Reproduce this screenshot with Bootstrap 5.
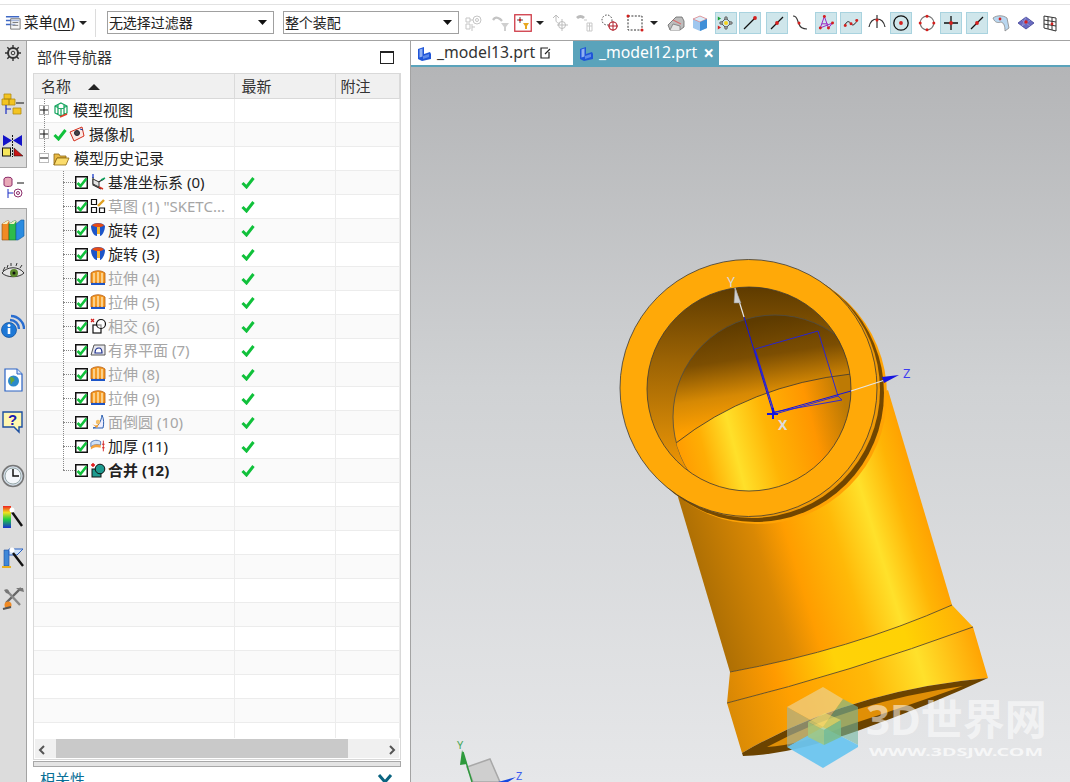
<!DOCTYPE html>
<html lang="zh-CN">
<head>
  <meta charset="UTF-8" />
  <title>部件导航器</title>
  <link href="https://cdn.jsdelivr.net/npm/bootstrap@5.3.0/dist/css/bootstrap.min.css" rel="stylesheet" />
  <style>
    html, body { height: 782px; overflow: hidden; }
    body { font-family: "Noto Sans", "Noto Sans CJK SC", sans-serif; font-size: 15px; color: #222; background: #fff; }
    .top-line { height: 5px; border-bottom: 1px solid #e2e2e2; }
    .tool-bar { height: 36px; border-bottom: 1px solid #a3a3a3; padding-left: 5px; }
    .tool-bar svg { display: block; }
    .menu-txt { margin-left: 2px; font-size: 14.500px; }
    .menu-txt u { text-underline-offset: 2px; }
    .caret-dn { width: 0; height: 0; border-left: 4px solid transparent; border-right: 4px solid transparent; border-top: 4px solid #222; }
    .tb-sep { width: 1px; height: 28px; background: #dcdcdc; margin-left: 8px; }
    .filter-sel { height: 23px; padding: 0 0 0 1px; font-size: 14px; line-height: 21px; color: #222; border: 1px solid #a0a0a0; border-radius: 0; background-size: 9px 5px; background-position: right 6px center;
      background-image: url("data:image/svg+xml,%3csvg xmlns='http://www.w3.org/2000/svg' viewBox='0 0 9 5'%3e%3cpath d='M0 0h9L4.500 5z' fill='%23111'/%3e%3c/svg%3e"); }
    .sel-a { width: 167px; margin-left: 11px; }
    .sel-b { width: 176px; margin-left: 9px; }
    .tb-cell { width: 22px; height: 22px; flex: none; display: flex; align-items: center; justify-content: center; border: 1px solid transparent; }
    .tb-cell.on { background: #cfe6eb; border-color: #a9d3df; }
    .tb-arrow { width: 10px; flex: none; display: flex; justify-content: center; }
    .tg1 { margin-left: 1px; } .tg2 { margin-left: 2px; } .tg3 { margin-left: 3px; }
    .tg4 { margin-left: 4px; } .tg5 { margin-left: 5px; } .tg6 { margin-left: 6px; }
    .work-area { height: 741px; }
    .side-rail { width: 27px; flex: none; background: #dcdcdc; border-right: 1px solid #a3a3a3; }
    .rail-btn { height: 42px; display: flex; align-items: center; justify-content: center; }
    .rail-btn.on { background: #fff; margin-right: -1px; border-top: 1px solid #a8a8a8; border-bottom: 1px solid #a8a8a8; }
    .rail-btn.far { margin-top: 12px; }
    .rail-btn.near { height: 40px; }
    .rail-gear { height: 42px; align-items: flex-start; padding-top: 4px; }
    .nav-panel { width: 384px; flex: none; border-right: 1px solid #a3a3a3; padding: 0 9px 0 6px; overflow: hidden; }
    .nav-title { height: 32px; padding: 0 7px 0 4px; font-size: 15px; color: #333; }
    .max-box { width: 14px; height: 13px; border: 1.500px solid #222; border-top-width: 2px; }
    .tbl-wrap { height: 687px; border: 1px solid #d9d9d9; padding: 0 0 1px; display: flex; flex-direction: column; }
    .tbl-scroll { height: 665px; overflow: hidden; }
    .part-tbl { width: 365px; table-layout: fixed; border-collapse: collapse; }
    .part-tbl th { height: 24px; padding: 0 0 0 7px; font-weight: 400; font-size: 15px; background: #f0f0f0; border-right: 1px solid #dadada; border-bottom: 1px solid #d9d9d9; color: #333; }
    .part-tbl th:last-child { padding-left: 5px; }
    .part-tbl td { height: 24px; padding: 0; border-right: 1px solid #ececec; border-bottom: 1px solid #ececec; }
    .part-tbl tr:nth-child(even) td { background: #fafafa; }
    .sort-up { display: inline-block; width: 0; height: 0; margin: 0 0 2px 17px; border-left: 6px solid transparent; border-right: 6px solid transparent; border-bottom: 6px solid #222; }
    .tree-cell { height: 23px; position: relative; white-space: nowrap; }
    .tree-root { padding-left: 5px; }
    .tree-leaf { padding-left: 29px; }
    .tree-leaf::before { content: ""; position: absolute; left: 29px; top: 0; bottom: 0; border-left: 1px dotted #888; }
    .tree-leaf.last::before { bottom: 50%; }
    .tree-root.stem::before { content: ""; position: absolute; left: 10px; top: 0; bottom: 0; border-left: 1px dotted #888; }
    .tree-root.stem-top::before { bottom: 60%; }
    .h-dots { width: 12px; flex: none; border-top: 1px dotted #888; }
    .expander { width: 10px; height: 10px; flex: none; border: 1px solid #bbb; background: #fff; position: relative; z-index: 1; display: flex; align-items: center; justify-content: center; }
    .leaf-check { margin-right: 2px; }
    .leaf-txt { margin-left: 2px; }
    .root-txt { margin-left: 4px; }
    .cam-icon { margin-left: 2px; }
    .txt-dim { color: #a6a6a6; }
    .ok-wrap { padding-left: 6px; display: flex; align-items: center; }
    .hscroll { height: 19px; margin: 1px 1px 0; background: #f0f0f0; align-items: center; }
    .hs-thumb { height: 19px; width: 292px; margin-left: 7px; background: #c9c9c9; }
    .hs-end { width: 14px; flex: none; }
    .split-bar { height: 6px; margin-top: 1px; border: 1px solid #a8a8a8; background: #e4e4e4; width: 368px; }
    .rel-title { padding: 0 8px 0 7px; color: #0a7096; font-size: 15px; line-height: 22px; margin-top: 1px; }
    .main-area { min-width: 0; }
    .tab-strip { height: 26px; border-bottom: 2px solid #5aa3bb; }
    .file-tab { height: 24px; padding-left: 6px; font-size: 15.800px; white-space: nowrap; }
    .tab-a { width: 162px; color: #333; }
    .tab-b { width: 146px; background: #5aa3bb; color: #fff; }
    .tab-name { margin-left: 6px; }
    .tab-x { margin-left: 6px; font-weight: 700; font-size: 19px; line-height: 20px; }
    .scene { display: block; }
    .scene text { font-family: "Noto Sans", "Noto Sans CJK SC", sans-serif; }
  </style>
</head>
<body>

<svg width="0" height="0" class="position-absolute">
  <defs>
    <symbol id="i-ok" viewBox="0 0 14 13"><path d="M1.500 7 5.500 11 12.500 2" fill="none" stroke="#10c13b" stroke-width="3"/></symbol>
    <symbol id="i-box" viewBox="0 0 13 13"><rect x=".75" y=".75" width="11.500" height="11.500" fill="#fff" stroke="#111" stroke-width="1.500"/><path d="M2.500 7 5.500 10 11.500 2.500" fill="none" stroke="#10c13b" stroke-width="2.600"/></symbol>
    <symbol id="i-view" viewBox="0 0 16 16"><path d="M8 1 14 4v7l-6 3-6-3V4zM2 4l6 3 6-3M8 7v7M5 2.500v10M11 2.500v10" fill="none" stroke="#11a35c" stroke-width="1.200"/><path d="M7 15l7-3" stroke="#e5402a" stroke-width="1.600"/></symbol>
    <symbol id="i-cam" viewBox="0 0 16 16"><path d="M1 6 13 1l2 9-10 5z" fill="#fbe9e4" stroke="#d4301e"/><circle cx="8" cy="7" r="2.500" fill="#444" stroke="#223"/><path d="M11 3l3 1" stroke="#1b3d9b"/></symbol>
    <symbol id="i-folder" viewBox="0 0 17 15"><path d="M1 3h5l1 2h6v2H4l-3 7z" fill="#e9ba45" stroke="#8a6510" stroke-width=".8"/><path d="M1 14 4 7h12l-3 7z" fill="#fbdc6c" stroke="#8a6510" stroke-width=".8"/></symbol>
    <symbol id="i-datum" viewBox="0 0 16 16"><path d="M3 3v8l8 4M3 11l11-6" fill="none" stroke="#222" stroke-width="1.100"/><path d="M3 5 9 8v5L3 10z" fill="#e4e4e4" stroke="#333" stroke-width="1"/><path d="M3 0v4" stroke="#1b3dcc" stroke-width="1.300"/><path d="M11 6l4-2" stroke="#11a35c" stroke-width="1.500"/><path d="M9 13l4 2" stroke="#d4301e" stroke-width="1.500"/></symbol>
    <symbol id="i-sketch" viewBox="0 0 16 16"><path d="M1.500 1.500h5v5h-5zM1.500 9.500h5v5h-5zM9.500 14.500V10h5v4.500z" fill="#fff" stroke="#111" stroke-width="1.200"/><path d="M8 8l6-6" stroke="#e0a020" stroke-width="2.400"/></symbol>
    <symbol id="i-rev" viewBox="0 0 16 16"><path d="M1 4C3 0 13 0 15 4c0 5-3 10-5 10V5H7v9C4 14 1 9 1 4z" fill="#1d55c8"/><path d="M2 3.500C4 .5 12 .5 14 3.500L11 5H6z" fill="#e54b16"/><path d="M7 5h3v7H7z" fill="#f7b42a"/></symbol>
    <symbol id="i-ext" viewBox="0 0 16 16"><path d="M1 3C5 0 11 0 15 3v10H1z" fill="#f59b25" stroke="#b45a10" stroke-width=".8"/><path d="M4 3v10M8 2v11M12 3v10" stroke="#fff3d0" stroke-width="1.200"/><path d="M1 13h14v2H1z" fill="#1d55c8"/></symbol>
    <symbol id="i-inter" viewBox="0 0 16 16"><path d="M1 1l3 3M4 1 1 4" stroke="#d4201e" stroke-width="1.200"/><rect x="3" y="7" width="8" height="8" fill="#fff" stroke="#111" stroke-width="1.200"/><circle cx="11" cy="6" r="4.500" fill="#fff" fill-opacity=".5" stroke="#111" stroke-width="1.200"/></symbol>
    <symbol id="i-plane" viewBox="0 0 16 16"><path d="M1 13 4 3h11v10z" fill="#e8e8ee" stroke="#555"/><path d="M5 11c0-4 2-5 4-5s3 2 3 5z" fill="#fff" stroke="#1c2f8c" stroke-width="1.200"/></symbol>
    <symbol id="i-blend" viewBox="0 0 16 16"><path d="M12 1c2 4 2 9 1 13H3c5-1 8-6 9-13z" fill="#eef" stroke="#2b5fb0"/><path d="M1 9c3 3 6 3 8 1l-2 4z" fill="#f59b25"/><circle cx="8" cy="8" r="2.200" fill="#f5c16a"/></symbol>
    <symbol id="i-thick" viewBox="0 0 18 16"><path d="M1 4c3-3 8-3 11-1v4c-3-1-8-1-11 2z" fill="#cfe0f5" stroke="#4f73b0"/><path d="M1 9c3-3 8-3 11-2v3c-3-1-8-1-11 2z" fill="#f5a23a"/><path d="M15 2v12M13.500 6h3M13.500 10h3" stroke="#d4201e"/></symbol>
    <symbol id="i-unite" viewBox="0 0 16 16"><path d="M1 3h4M3 1v4" stroke="#e01010" stroke-width="1.400"/><rect x="2" y="7" width="9" height="8" fill="#1d9a8e" stroke="#111"/><circle cx="10" cy="7" r="4.800" fill="#1d9a8e" stroke="#111"/></symbol>

    <symbol id="t-menu" viewBox="0 0 18 18"><path d="M1 3h14M1 7h14M1 11h10" stroke="#3f68c4" stroke-width="1.600"/><path d="M6 5h10v11H6z" fill="#eee" fill-opacity=".6" stroke="#777"/><path d="M8 9h6M8 12h6" stroke="#777"/></symbol>
    <symbol id="t-g1" viewBox="0 0 18 18"><g fill="none" stroke="#c5c5c5"><path d="M1 4h4v4H1zM1 10h4v5H1zM5 6h3"/><circle cx="12" cy="6" r="4"/><circle cx="12" cy="6" r="1.500"/><path d="M7 10v7M7 13h3"/></g></symbol>
    <symbol id="t-g2" viewBox="0 0 18 18"><path d="M1 6c2-3 4-3 7-1l2 2" fill="none" stroke="#c4c4c4" stroke-width="2.400"/><path d="M9 9h8l-3 4v4h-2v-4z" fill="#cfcfcf"/></symbol>
    <symbol id="t-filter" viewBox="0 0 18 18"><rect x=".75" y=".75" width="16.500" height="16.500" fill="#fff" stroke="#cf3a46" stroke-width="1.300"/><path d="M6 3v6M3 6h6" stroke="#555"/><circle cx="6" cy="6" r="1.300" fill="#d4201e"/><path d="M9 9h6l-2 3v3h-2v-3z" fill="#e8a820"/></symbol>
    <symbol id="t-g3" viewBox="0 0 18 18"><g fill="none" stroke="#bdbdbd"><path d="M1 4 4 1l3 3M4 1v6c0 1 2 2 4 3"/><circle cx="10" cy="11" r="3.500"/><path d="M10 5v12M5 11h11"/></g></symbol>
    <symbol id="t-g4" viewBox="0 0 18 18"><path d="M1 4c2-2 5-2 7 0" fill="none" stroke="#bbb" stroke-width="2.800"/><path d="M8 6h3M11 9h5v8h-5zM11 12h5M13.500 9v8" fill="none" stroke="#c9c9c9"/></symbol>
    <symbol id="t-dot-box" viewBox="0 0 18 18"><circle cx="6" cy="6" r="5" fill="none" stroke="#444" stroke-dasharray="1.500 1.500"/><circle cx="12" cy="12" r="4" fill="#fff" stroke="#b3232e" stroke-width="1.200"/><path d="M12 7v10M7 12h10" stroke="#b3232e"/></symbol>
    <symbol id="t-rect" viewBox="0 0 18 18"><rect x="2" y="2" width="14" height="14" fill="none" stroke="#333" stroke-dasharray="2 1.400"/><circle cx="2" cy="2" r="1.500" fill="#d4201e"/><circle cx="16" cy="16" r="1.500" fill="#d4201e"/></symbol>
    <symbol id="t-shoe" viewBox="0 0 18 18"><path d="M1 11 9 3h6l2 4v6l-4 3H3z" fill="#bdbdbd" stroke="#666" stroke-width=".8"/><path d="M6 6l8 4" stroke="#d96b6b" stroke-width="1.200"/><path d="M3 16l3-6 7 2v4" fill="#e4e4e4" stroke="#777" stroke-width=".8"/></symbol>
    <symbol id="t-cube" viewBox="0 0 18 18"><path d="M2 5l7-3 7 3v9l-7 3-7-3z" fill="#9ec7ef"/><path d="M9 8 2 5l7-3 7 3z" fill="#d9edfa" stroke="#e57a7a" stroke-width=".7"/><path d="M9 8v9l7-3V5z" fill="#3f8fd8"/></symbol>
    <symbol id="t-points" viewBox="0 0 22 22"><path d="M11 5l6 6-6 6-6-6z" fill="none" stroke="#333"/><circle cx="11" cy="11" r="2.500" fill="#f6d31e"/><g fill="#fff" stroke="#222"><circle cx="11" cy="5" r="1.500"/><circle cx="17" cy="11" r="1.500"/><circle cx="11" cy="17" r="1.500"/><circle cx="5" cy="11" r="1.500"/></g><path d="M1 3v5l4-2.500z" fill="#1aa035"/><path d="M1 14v5l4-2.500z" fill="#d4201e"/></symbol>
    <symbol id="t-line-end" viewBox="0 0 18 18"><path d="M3 15 14 4" stroke="#111" stroke-width="1.300"/><circle cx="14" cy="4" r="1.900" fill="#d4201e"/></symbol>
    <symbol id="t-line-mid" viewBox="0 0 18 18"><path d="M3 15 15 3" stroke="#111" stroke-width="1.300"/><circle cx="9" cy="9" r="1.900" fill="#d4201e"/></symbol>
    <symbol id="t-s" viewBox="0 0 18 18"><path d="M2 2c5 0 4 5 6 8 1 3 3 5 8 5" fill="none" stroke="#333" stroke-width="1.200"/><circle cx="8" cy="9" r="1.500" fill="#d4201e"/></symbol>
    <symbol id="t-poly" viewBox="0 0 22 22"><path d="M4 17 9 3l5 14 5-6zM6 12h7" fill="none" stroke="#9a22c4" stroke-width="1.200"/><g fill="#d4201e"><circle cx="4" cy="17" r="1.800"/><circle cx="9" cy="3" r="1.800"/><circle cx="14" cy="17" r="1.800"/><circle cx="19" cy="11" r="1.800"/></g></symbol>
    <symbol id="t-wave" viewBox="0 0 22 22"><path d="M3 15c3-8 6-6 8-3s5 1 8-5" fill="none" stroke="#222" stroke-width="1.200"/><g fill="#d4201e"><circle cx="4" cy="14" r="1.800"/><circle cx="11" cy="12" r="1.800"/><circle cx="18" cy="8" r="1.800"/></g></symbol>
    <symbol id="t-arc" viewBox="0 0 18 18"><path d="M1 13c1-5 4-8 8-8s7 3 8 8M9 1v13" fill="none" stroke="#333" stroke-width="1.200"/><circle cx="9" cy="6" r="1.500" fill="#d4201e"/></symbol>
    <symbol id="t-circ" viewBox="0 0 18 18"><circle cx="9" cy="9" r="7.200" fill="none" stroke="#111" stroke-width="1.300"/><circle cx="9" cy="9" r="1.900" fill="#d4201e"/></symbol>
    <symbol id="t-circ4" viewBox="0 0 18 18"><circle cx="9" cy="9" r="6.800" fill="none" stroke="#777" stroke-width="1.200"/><g fill="#d4201e"><circle cx="9" cy="2.200" r="1.500"/><circle cx="9" cy="15.800" r="1.500"/><circle cx="2.200" cy="9" r="1.500"/><circle cx="15.800" cy="9" r="1.500"/></g></symbol>
    <symbol id="t-cross" viewBox="0 0 18 18"><path d="M9 2v14M2 9h14" stroke="#111" stroke-width="1.300"/><circle cx="9" cy="9" r="1.900" fill="#d4201e"/></symbol>
    <symbol id="t-surf" viewBox="0 0 18 18"><path d="M1 4c4-3 10-3 14 0l2 10-4 3c0-5-1-8-4-9-3 1-6 1-8-4z" fill="#b9d7f0" stroke="#888" stroke-width=".8"/><circle cx="8" cy="5" r="1.400" fill="#d4201e"/></symbol>
    <symbol id="t-dsurf" viewBox="0 0 18 18"><path d="M1 9 9 3l8 6-8 6z" fill="#6a6cc0" stroke="#3d3f95" stroke-width=".8"/><path d="M5 6l8 6M9 3l-4 9M13 6l-8 6" stroke="#a9aae0" stroke-width=".6"/><circle cx="9" cy="8" r="1.700" fill="#d4201e"/></symbol>
    <symbol id="t-grid" viewBox="0 0 18 18"><path d="M3 2l12 2v13L3 14zM7 3v12M11 3.500V16M3 6l12 2M3 10l12 2" fill="none" stroke="#333"/><circle cx="11" cy="10" r="1.400" fill="#d4201e"/></symbol>

    <symbol id="r-gear" viewBox="0 0 16 16"><circle cx="8" cy="8" r="5" fill="none" stroke="#333" stroke-width="2"/><circle cx="8" cy="8" r="1.800" fill="#dcdcdc" stroke="#333"/><path d="M8 0v3M8 13v3M0 8h3M13 8h3M2.300 2.300l2 2M11.700 11.700l2 2M2.300 13.700l2-2M11.700 4.300l2-2" stroke="#333" stroke-width="1.400"/></symbol>
    <symbol id="r-asm" viewBox="0 0 24 24"><path d="M3 2h7v5H3zM1 7h7v6H1zM8 7h6v6H8z" fill="#f3c422" stroke="#b18a10" stroke-width=".8"/><path d="M5 13v9M5 17h5" stroke="#1b2fc4" stroke-width="1.200"/><path d="M15 11h8" stroke="#111"/><path d="M12 16h8v6h-8z" fill="#f3c422" stroke="#b18a10" stroke-width=".8"/></symbol>
    <symbol id="r-con" viewBox="0 0 24 24"><path d="M2 1v11l9-5.500zM21 1v11l-9-5.500z" fill="#1414c8"/><path d="M11.500 1v22" stroke="#111" stroke-dasharray="2 1"/><rect x="1.500" y="14" width="8" height="8" fill="#f6e65a" stroke="#111"/><path d="M13 14v8h9z" fill="#c81414" stroke="#111" stroke-width=".5"/></symbol>
    <symbol id="r-part" viewBox="0 0 24 24"><ellipse cx="6" cy="3" rx="4" ry="1.800" fill="#e8a9b8" stroke="#8c2d6b"/><path d="M2 3v6c0 2 8 2 8 0V3" fill="#e8a9b8" stroke="#8c2d6b"/><path d="M6 13v9M6 17h5" stroke="#1b2fc4"/><path d="M15 7h7" stroke="#111"/><circle cx="16" cy="17" r="4" fill="none" stroke="#8c2d6b"/><circle cx="16" cy="17" r="1.500" fill="none" stroke="#8c2d6b"/></symbol>
    <symbol id="r-books" viewBox="0 0 24 24"><path d="M1 6l5-3h2v19H1z" fill="#f08a24" stroke="#8a4d10" stroke-width=".6"/><path d="M8 6l5-3h2v19H8z" fill="#2ebc4a" stroke="#15702a" stroke-width=".6"/><path d="M15 6l5-4h3v16l-6 4h-2z" fill="#2a8be0" stroke="#125a9a" stroke-width=".6"/><path d="M1 6l5-3h2l-2 3zM8 6l5-3h2l-2 3z" fill="#f5efc0"/></symbol>
    <symbol id="r-eye" viewBox="0 0 24 24"><path d="M1 13C6 6 18 6 23 13c-5 5-17 5-22 0z" fill="#e4e4e4" stroke="#333"/><circle cx="13" cy="13" r="4" fill="#5c8a2c"/><circle cx="13" cy="13" r="1.500" fill="#111"/><path d="M2 11 4 7M6 8l1-3M10 6V3M15 6l1-3M19 8l2-3" stroke="#333"/></symbol>
    <symbol id="r-info" viewBox="0 0 24 24"><path d="M9 6c5 0 9 4 9 9M10 2c7 0 13 6 13 13" fill="none" stroke="#2a6ed0" stroke-width="2.400"/><circle cx="8" cy="16" r="7.500" fill="#1e78d6" stroke="#0c4a96" stroke-width=".7"/><circle cx="8" cy="11.500" r="1.500" fill="#fff"/><path d="M8 14v6" stroke="#fff" stroke-width="2.600"/></symbol>
    <symbol id="r-web" viewBox="0 0 24 24"><path d="M4 1h12l5 5v17H4z" fill="#fff" stroke="#2a62c4" stroke-width="1.200"/><path d="M16 1v5h5" fill="#d8e6fa" stroke="#2a62c4"/><circle cx="12.500" cy="13" r="5.500" fill="#2b8ac9"/><path d="M9 10c2-1 4 0 4 2s-3 1-3 4" fill="#67a93a" stroke="#67a93a"/></symbol>
    <symbol id="r-help" viewBox="0 0 24 24"><path d="M2 2h19v15h-3v5l-5-5H2z" fill="#fff7b0" stroke="#1c4fa0" stroke-width="1.400"/><text x="11.500" y="14.500" text-anchor="middle" font-size="15" font-weight="700" fill="#1b1bb0" font-family="Liberation Sans, sans-serif">?</text></symbol>
    <symbol id="r-clock" viewBox="0 0 24 24"><circle cx="12" cy="12" r="10.500" fill="#d4deea" stroke="#777" stroke-width="1.600"/><circle cx="12" cy="12" r="8" fill="#f4f7fb" stroke="#9aa"/><path d="M12 5v7h6" fill="none" stroke="#111" stroke-width="1.500"/></symbol>
    <symbol id="r-palette" viewBox="0 0 24 24"><defs><linearGradient id="rb" x1="0" y1="0" x2="0" y2="1"><stop offset="0" stop-color="#f02020"/><stop offset=".3" stop-color="#f0e020"/><stop offset=".6" stop-color="#20d040"/><stop offset="1" stop-color="#1c2fd0"/></linearGradient></defs><rect x="2" y="1" width="8" height="22" fill="url(#rb)"/><path d="M11 7l10 14" stroke="#111" stroke-width="2.400"/><circle cx="11" cy="5" r="2.500" fill="#fff"/></symbol>
    <symbol id="r-wand" viewBox="0 0 24 24"><path d="M3 5h5v16H3z" fill="#3f88d8" stroke="#1c4fa0" stroke-width=".6"/><path d="M1 22h9" stroke="#e8b020" stroke-width="2"/><path d="M8 4h14l-6 6h-8z" fill="#cfe2f7" stroke="#2a62c4"/><path d="M12 8l10 13" stroke="#111" stroke-width="2.400"/><circle cx="11" cy="5" r="2.500" fill="#fff"/></symbol>
    <symbol id="r-tools" viewBox="0 0 24 24"><path d="M20 2 5 17" stroke="#666" stroke-width="2.400"/><path d="M15 2h7l1 4-4-1z" fill="#777"/><path d="M7 6l12 13" stroke="#888" stroke-width="2.400"/><path d="M3 4c3-2 6 0 5 4L5 7z" fill="#777"/><circle cx="7" cy="19" r="3.500" fill="#f08a24"/><path d="M2 23l8-2" stroke="#555" stroke-width="2"/></symbol>

    <symbol id="tab-part" viewBox="0 0 14 15"><path d="M1 3 7 1v7l6-2 1 2v5l-9 2-4-2z" fill="#1f55d8"/><path d="M2.500 3.500 5.500 2.500v8l-3 1z" fill="#8fb0f2"/><path d="M6 10l6-2v3l-6 2z" fill="#5d8aea"/></symbol>

    <linearGradient id="g-bg" x1="0" y1="0" x2="0" y2="1"><stop offset="0" stop-color="#b4b5b7"/><stop offset=".45" stop-color="#d0d2d4"/><stop offset="1" stop-color="#e6e7e9"/></linearGradient>
    <linearGradient id="g-body" gradientUnits="userSpaceOnUse" x1="680" y1="555" x2="925" y2="480"><stop offset="0" stop-color="#a56a04"/><stop offset=".3" stop-color="#d98804"/><stop offset=".42" stop-color="#ff9d00"/><stop offset=".6" stop-color="#ffb908"/><stop offset=".75" stop-color="#ffe12b"/><stop offset=".88" stop-color="#ffb405"/><stop offset="1" stop-color="#ff9a00"/></linearGradient>
    <linearGradient id="g-band" gradientUnits="userSpaceOnUse" x1="728" y1="690" x2="965" y2="620"><stop offset="0" stop-color="#d98804"/><stop offset=".2" stop-color="#ff9a00"/><stop offset=".45" stop-color="#ffd208"/><stop offset=".75" stop-color="#ffd204"/><stop offset="1" stop-color="#ffb005"/></linearGradient>
    <linearGradient id="g-foot" gradientUnits="userSpaceOnUse" x1="730" y1="725" x2="985" y2="650"><stop offset="0" stop-color="#d98a06"/><stop offset=".25" stop-color="#ffa000"/><stop offset=".55" stop-color="#ffb908"/><stop offset=".75" stop-color="#ffe12b"/><stop offset="1" stop-color="#ff9f00"/></linearGradient>
    <linearGradient id="g-hole" x1="0" y1="0" x2="0" y2="1"><stop offset="0" stop-color="#5e3b00"/><stop offset=".35" stop-color="#9a6204"/><stop offset=".7" stop-color="#d08506"/><stop offset="1" stop-color="#ff9d00"/></linearGradient>
    <linearGradient id="g-dome" gradientUnits="userSpaceOnUse" x1="760" y1="320" x2="775" y2="420"><stop offset="0" stop-color="#5e3b00"/><stop offset=".35" stop-color="#7c4e02"/><stop offset=".7" stop-color="#d68904"/><stop offset="1" stop-color="#ffa000"/></linearGradient>
    <linearGradient id="g-lower" gradientUnits="userSpaceOnUse" x1="675" y1="470" x2="850" y2="425"><stop offset="0" stop-color="#ff9600"/><stop offset=".18" stop-color="#ffae04"/><stop offset=".35" stop-color="#ffe02a"/><stop offset=".55" stop-color="#ffb405"/><stop offset=".8" stop-color="#ff9600"/><stop offset="1" stop-color="#bd7a04"/></linearGradient>
    <linearGradient id="g-lip" x1="0" y1="0" x2="1" y2="1"><stop offset="0" stop-color="#d69210"/><stop offset=".55" stop-color="#7a4c00"/><stop offset="1" stop-color="#6a4100"/></linearGradient>
    <clipPath id="c-hole"><circle cx="749" cy="389" r="102"/></clipPath>
    <clipPath id="c-dome"><circle cx="775" cy="417" r="102"/></clipPath>
    <clipPath id="c-frame"><rect x="411" y="67" width="659" height="715"/></clipPath>
  </defs>
</svg>

<div class="top-line"></div>
<div class="tool-bar d-flex align-items-center">
  <svg width="17" height="17"><use href="#t-menu"/></svg>
  <span class="menu-txt">菜单(<u>M</u>)</span>
  <span class="caret-dn ms-1"></span>
  <span class="tb-sep"></span>
  <select class="form-select filter-sel sel-a"><option>无选择过滤器</option></select>
  <select class="form-select filter-sel sel-b"><option>整个装配</option></select>
  <div class="d-flex align-items-center" id="toolIcons"></div>
</div>

<div class="work-area d-flex">
  <div class="side-rail">
    <div class="rail-btn rail-gear"><svg width="16" height="16"><use href="#r-gear"/></svg></div>
    <div id="railIcons"></div>
  </div>

  <div class="nav-panel">
    <div class="nav-title d-flex align-items-center justify-content-between">
      <span>部件导航器</span>
      <span class="max-box"></span>
    </div>
    <div class="tbl-wrap">
      <div class="tbl-scroll">
        <table class="part-tbl">
          <colgroup><col width="200"><col width="101"><col width="64"></colgroup>
          <thead><tr><th>名称<span class="sort-up"></span></th><th>最新</th><th>附注</th></tr></thead>
          <tbody id="treeRows"></tbody>
        </table>
      </div>
      <div class="hscroll d-flex">
        <div class="hs-end text-center"><svg width="8" height="10" viewBox="0 0 8 10"><path d="M6 1 2 5l4 4" fill="none" stroke="#555" stroke-width="2"/></svg></div>
        <div class="hs-thumb"></div>
        <div class="hs-end ms-auto text-center"><svg width="8" height="10" viewBox="0 0 8 10"><path d="M2 1l4 4-4 4" fill="none" stroke="#555" stroke-width="2"/></svg></div>
      </div>
    </div>
    <div class="split-bar"></div>
    <div class="rel-title d-flex justify-content-between align-items-center">
      <span>相关性</span>
      <svg width="16" height="10" viewBox="0 0 16 10"><path d="M2 1l6 7 6-7" fill="none" stroke="#0a6480" stroke-width="3"/></svg>
    </div>
  </div>

  <div class="main-area flex-grow-1">
    <div class="tab-strip d-flex">
      <div class="file-tab tab-a d-flex align-items-center">
        <svg width="14" height="15"><use href="#tab-part"/></svg>
        <span class="tab-name">_model13.prt</span>
        <svg class="ms-1" width="12" height="12" viewBox="0 0 12 12"><path d="M9 1H2v10h8V5M6 7l5-5" fill="none" stroke="#222" stroke-width="1.200"/></svg>
      </div>
      <div class="file-tab tab-b d-flex align-items-center">
        <svg width="14" height="15"><use href="#tab-part"/></svg>
        <span class="tab-name">_model12.prt</span>
        <span class="tab-x">×</span>
      </div>
    </div>

    <svg class="scene" width="659" height="715" viewBox="411 67 659 715">
      <rect x="411" y="67" width="659" height="715" fill="url(#g-bg)"/>

      <!-- elbow body -->
      <path d="M678 497 730 672Q850 650 952 605L888 390Z" fill="url(#g-body)"/>
      <path d="M730 672Q850 650 952 605L973 627Q850 672 727 703Z" fill="url(#g-band)"/>
      <path d="M727 703Q850 672 973 627L988 678Q850 690 742 753Z" fill="url(#g-foot)"/>
      <path d="M730 672Q850 650 952 605M727 703Q850 672 973 627" fill="none" stroke="#5b4a25" stroke-width=".9"/>
      <path d="M742 753Q850 690 988 678 930 705 860 730 790 755 743 756Z" fill="#6b4300"/>
      <path d="M767 747Q850 702 963 686 910 705 843 727 800 745 767 747Z" fill="#e08f06"/>

      <!-- flange -->
      <circle cx="758" cy="395" r="129" fill="#ffa305"/>
      <circle cx="755" cy="393" r="129" fill="url(#g-lip)"/>
      <circle cx="752" cy="390" r="128" fill="#f09a06"/>
      <circle cx="748.500" cy="388" r="128.500" fill="#ffa908" stroke="#3c3a36" stroke-width=".8"/>

      <!-- hole and dome -->
      <circle cx="749" cy="389" r="102" fill="url(#g-hole)"/>
      <g clip-path="url(#c-hole)">
        <circle cx="775" cy="417" r="102" fill="url(#g-dome)" stroke="#4c4c48" stroke-width=".8"/>
        <g clip-path="url(#c-dome)">
          <path d="M676 443Q750 385 851 374V510H660Z" fill="url(#g-lower)"/>
          <path d="M676 443Q750 385 851 374" fill="none" stroke="#4a4030" stroke-width=".9"/>
        </g>
      </g>
      <circle cx="749" cy="389" r="102" fill="none" stroke="#3c3a36" stroke-width=".8"/>

      <!-- datum csys and sketch -->
      <path d="M755 349 818 331 838 396 775 414ZM755 351 774 412 842 400 838 396" fill="none" stroke="#1f1fe6" stroke-width=".9"/>
      <path d="M773 413 744 317" stroke="#1414e0" stroke-width="1"/>
      <path d="M744 317 735 288" stroke="#e6e6e6" stroke-width="1.200"/>
      <path d="M735 288 741 303 734 303Z" fill="#d0d0d0" stroke="#888" stroke-width=".5"/>
      <path d="M773 413 851 391" stroke="#1414e0" stroke-width="1"/>
      <path d="M851 391 885 380" stroke="#e6e6e6" stroke-width="1.200"/>
      <path d="M899 375 884 383 882 377Z" fill="#1414e0"/>
      <path d="M767 414h11M773 408v11" stroke="#1414e0" stroke-width="2"/>
      <text x="727" y="287" font-size="14" fill="#d8d8d8">Y</text>
      <text x="903" y="378" font-size="13" fill="#3c3cf0">Z</text>
      <text x="778" y="430" font-size="14" font-weight="700" fill="#dcdcdc">X</text>

      <!-- small triad -->
      <path d="M467 767 490 759 500 782H473Z" fill="#cfcfcf" stroke="#a8a8a8" stroke-width="1.500"/>
      <path d="M463 752 472 782" stroke="#2e9a3c" stroke-width="1.500"/>
      <path d="M462 750 467 764 460 765Z" fill="#2e9a3c"/>
      <path d="M498 782 516 777 508 782Z" fill="#1648e0"/>
      <text x="457" y="749" font-size="11" fill="#4aa75a">Y</text>
      <text x="516" y="780" font-size="11" fill="#3d5cf0">Z</text>

      <!-- watermark -->
      <g clip-path="url(#c-frame)">
        <path d="M823 687 843 699 823 727 787 707Z" fill="#e9d9a6" fill-opacity=".6"/>
        <path d="M787 707 823 727 787 747Z" fill="#9fb6a6" fill-opacity=".6"/>
        <path d="M843 699 858 707V745L823 727Z" fill="#6fb5a0" fill-opacity=".6"/>
        <path d="M787 747 823 727 858 745V747L823 768Z" fill="#6cc5ef" fill-opacity=".95"/>
        <path d="M808 722 825 713 841 720 824 730Z" fill="#f5e86a" fill-opacity=".55"/>
        <path d="M808 722 824 730V745L808 737Z" fill="#a6c878" fill-opacity=".8"/>
        <path d="M824 730 841 720V737L824 745Z" fill="#7dbd8a" fill-opacity=".85"/>
        <text x="866" y="735" font-size="42" font-weight="700" fill="#fff" fill-opacity=".55">3D世界网</text>
        <text x="869" y="756" font-size="10" font-weight="700" textLength="174" lengthAdjust="spacingAndGlyphs" fill="#fff" fill-opacity=".7">WWW.3DSJW.COM</text>
      </g>
    </svg>
  </div>
</div>

<script src="https://cdn.jsdelivr.net/npm/bootstrap@5.3.0/dist/js/bootstrap.bundle.min.js"></script>
<script>
  // toolbar: [symbol, gap class, active]
  const tools = [
    ['t-g1', 'tg5'], ['t-g2', 'tg5'], ['t-filter', ''], ['arrow', 'tg1'], ['t-g3', 'tg5'], ['t-g4', 'tg2'],
    ['t-dot-box', 'tg3'], ['t-rect', 'tg3'], ['arrow', 'tg3'], ['t-shoe', 'tg6'], ['t-cube', 'tg2'],
    ['t-points', 'tg4', 1], ['t-line-end', 'tg2', 1], ['t-line-mid', 'tg5', 1], ['t-s', 'tg1'],
    ['t-poly', 'tg4', 1], ['t-wave', 'tg3', 1], ['t-arc', 'tg4'], ['t-circ', 'tg2', 1], ['t-circ4', 'tg4'],
    ['t-cross', 'tg2', 1], ['t-line-mid', 'tg4', 1], ['t-surf', 'tg2'], ['t-dsurf', 'tg3'], ['t-grid', 'tg2']
  ];
  document.getElementById('toolIcons').innerHTML = tools.map(([id, gap, on], i) => {
    if (id === 'arrow') return `<span class="tb-arrow ${gap}"><span class="caret-dn"></span></span>`;
    const first = i === 0 ? 'ms-1' : '';
    return `<span class="tb-cell ${gap} ${first} ${on ? 'on' : ''}"><svg width="18" height="18"><use href="#${id}"/></svg></span>`;
  }).join('');

  // left rail
  const rail = [['r-asm', ''], ['r-con', ''], ['r-part', 'on'], ['r-books', ''], ['r-eye', ''], ['r-info', 'far'], ['r-web', 'far'], ['r-help', ''], ['r-clock', 'far'], ['r-palette', 'near'], ['r-wand', 'near'], ['r-tools', '']];
  document.getElementById('railIcons').innerHTML = rail.map(([id, cls]) =>
    `<div class="rail-btn ${cls}"><svg width="24" height="24"><use href="#${id}"/></svg></div>`).join('');

  // feature tree
  const leaves = [
    ['i-datum', '基准坐标系 (0)', 0], ['i-sketch', '草图 (1) "SKETC...', 1], ['i-rev', '旋转 (2)', 0], ['i-rev', '旋转 (3)', 0],
    ['i-ext', '拉伸 (4)', 1], ['i-ext', '拉伸 (5)', 1], ['i-inter', '相交 (6)', 1], ['i-plane', '有界平面 (7)', 1],
    ['i-ext', '拉伸 (8)', 1], ['i-ext', '拉伸 (9)', 1], ['i-blend', '面倒圆 (10)', 1], ['i-thick', '加厚 (11)', 0], ['i-unite', '合并 (12)', 0]
  ];
  const use = (id, w, h, cls = '') => `<svg class="flex-none ${cls}" width="${w}" height="${h}"><use href="#${id}"/></svg>`;
  const plus = '<svg width="8" height="8"><path d="M0 4h8M4 0v8" stroke="#111"/></svg>';
  const minus = '<svg width="8" height="8"><path d="M0 4h8" stroke="#111"/></svg>';
  const okMark = `<div class="ok-wrap">${use('i-ok', 14, 13)}</div>`;
  let rows = `
    <tr><td><div class="tree-cell tree-root stem d-flex align-items-center"><span class="expander">${plus}</span>${use('i-view', 16, 16, 'ms-1')}<span class="root-txt">模型视图</span></div></td><td></td><td></td></tr>
    <tr><td><div class="tree-cell tree-root stem d-flex align-items-center"><span class="expander">${plus}</span>${use('i-ok', 14, 13, 'ms-1')}${use('i-cam', 16, 16, 'cam-icon')}<span class="root-txt">摄像机</span></div></td><td></td><td></td></tr>
    <tr><td><div class="tree-cell tree-root stem stem-top d-flex align-items-center"><span class="expander">${minus}</span>${use('i-folder', 17, 15, 'ms-1')}<span class="root-txt">模型历史记录</span></div></td><td></td><td></td></tr>`;
  leaves.forEach(([icon, label, dim], i) => {
    const last = i === leaves.length - 1;
    rows += `<tr><td><div class="tree-cell tree-leaf ${last ? 'last' : ''} d-flex align-items-center"><span class="h-dots"></span>${use('i-box', 13, 13, 'leaf-check')}${use(icon, 16, 16)}<span class="leaf-txt ${dim ? 'txt-dim' : ''} ${last ? 'fw-bold' : ''}">${label}</span></div></td><td>${okMark}</td><td></td></tr>`;
  });
  for (let i = 0; i < 11; i++) rows += '<tr><td></td><td></td><td></td></tr>';
  document.getElementById('treeRows').innerHTML = rows;
</script>
</body>
</html>
